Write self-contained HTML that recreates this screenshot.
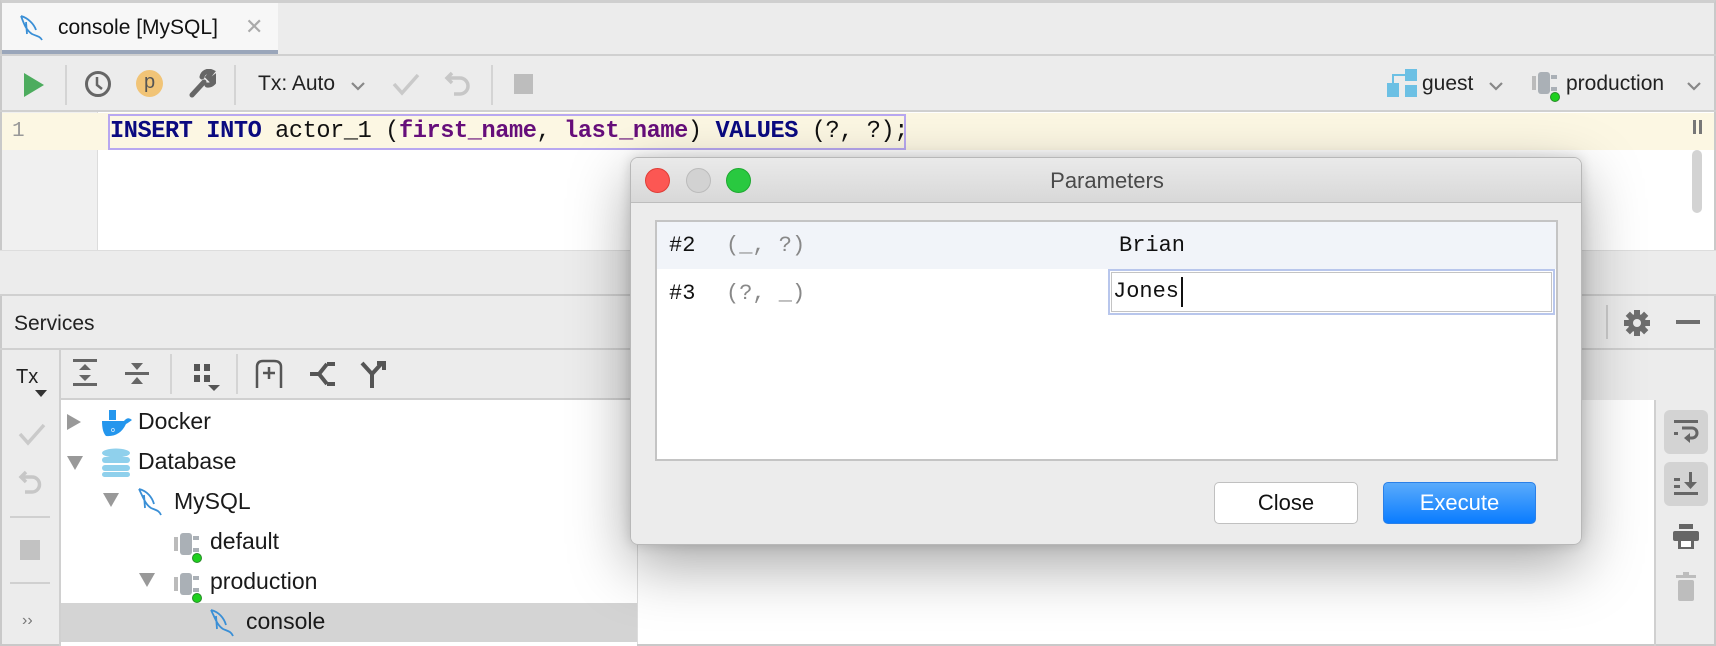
<!DOCTYPE html>
<html><head><meta charset="utf-8">
<style>
*{margin:0;padding:0;box-sizing:border-box}
body{width:1716px;height:646px;overflow:hidden;background:#ececec;font-family:"Liberation Sans",sans-serif;position:relative;color:#222}
.a{position:absolute}
.mono{font-family:"Liberation Mono",monospace}
.t{font-size:23px;color:#1a1a1a}
</style></head><body>
<div class="a" style="left:0;top:0;width:1716px;height:646px;border:2px solid #c9c9c9;border-top:3px solid #cfcfcf"></div>
<div class="a" style="left:2px;top:3px;width:276px;height:48px;background:#f7f7f7"></div>
<div class="a" style="left:2px;top:50px;width:276px;height:5px;background:#9aa6ba"></div>
<div class="a" style="left:0;top:54px;width:1716px;height:2px;background:#d0d0d0"></div>
<svg class="a" style="left:18px;top:14px" width="32" height="28" viewBox="0 0 32 28"><path d="M3 2 C6 10 8 16 14 20 C18 22 22 22 24 26 M3 2 C10 4 16 10 18 16 M8 8 L9 20" stroke="#3a8fd6" stroke-width="1.8" fill="none"/></svg>
<div class="a" style="left:58px;top:16px;font-size:21px;color:#111">console [MySQL]</div>
<div class="a" style="left:245px;top:14px;font-size:22px;color:#aaa">✕</div>
<svg class="a" style="left:22px;top:72px" width="24" height="26"><path d="M2 1 L22 13 L2 25Z" fill="#4dac5e"/></svg>
<div class="a" style="left:65px;top:65px;width:2px;height:40px;background:#d4d4d4"></div>
<svg class="a" style="left:84px;top:70px" width="28" height="28"><circle cx="14" cy="14" r="11.5" stroke="#666" stroke-width="3" fill="none"/><path d="M13 7 V15 L18 19" stroke="#666" stroke-width="2.5" fill="none"/></svg>
<div class="a" style="left:136px;top:70px;width:27px;height:27px;border-radius:50%;background:#f1c477;font-size:20px;text-align:center;line-height:25px;color:#555">p</div>
<svg class="a" style="left:188px;top:69px" width="28" height="30"><path d="M4 26 L16 13 M14 8 A7 7 0 0 1 24 3 L20 8 L23 11 L27 8 A7 7 0 0 1 19 16" stroke="#666" stroke-width="5" fill="none" stroke-linecap="round"/></svg>
<div class="a" style="left:234px;top:65px;width:2px;height:40px;background:#d4d4d4"></div>
<div class="a" style="left:258px;top:72px;font-size:21px;color:#222">Tx: Auto</div>
<svg class="a" style="left:350px;top:80px" width="16" height="12"><path d="M2 3 L8 9 L14 3" stroke="#888" stroke-width="2.2" fill="none"/></svg>
<svg class="a" style="left:392px;top:72px" width="28" height="24"><path d="M2 12 L10 21 L26 3" stroke="#c9c9c9" stroke-width="3.5" fill="none"/></svg>
<svg class="a" style="left:444px;top:69px" width="28" height="30"><path d="M8 4 L3 9 L8 14 M3 9 H16 A8 8 0 0 1 16 25 H10" stroke="#c7c7c7" stroke-width="3.5" fill="none"/></svg>
<div class="a" style="left:491px;top:65px;width:2px;height:40px;background:#d4d4d4"></div>
<div class="a" style="left:514px;top:74px;width:19px;height:20px;background:#bdbdbd"></div>
<svg class="a" style="left:1387px;top:69px" width="34" height="30"><rect x="0" y="14" width="12" height="14" fill="#6cc0e4"/><rect x="18" y="0" width="12" height="12" fill="#6cc0e4"/><rect x="18" y="16" width="12" height="12" fill="#6cc0e4"/><path d="M6 14 V6 H18" stroke="#6cc0e4" stroke-width="2" fill="none"/></svg>
<div class="a" style="left:1422px;top:72px;font-size:21px;color:#222">guest</div>
<svg class="a" style="left:1488px;top:80px" width="16" height="12"><path d="M2 3 L8 9 L14 3" stroke="#888" stroke-width="2.2" fill="none"/></svg>
<svg class="a" style="left:1531px;top:70px" width="32" height="34"><rect x="1" y="6" width="4" height="14" fill="#bbb"/><rect x="7" y="2" width="12" height="22" rx="3" fill="#aab0b6"/><rect x="20" y="5" width="6" height="4" fill="#aab0b6"/><rect x="20" y="17" width="6" height="4" fill="#aab0b6"/><circle cx="24" cy="27" r="4.5" fill="#1ed01e" stroke="#2a8a2a" stroke-width="1"/></svg>
<div class="a" style="left:1566px;top:72px;font-size:21px;color:#222">production</div>
<svg class="a" style="left:1686px;top:80px" width="16" height="12"><path d="M2 3 L8 9 L14 3" stroke="#888" stroke-width="2.2" fill="none"/></svg>
<div class="a" style="left:0;top:110px;width:1716px;height:2px;background:#d0d0d0"></div>
<div class="a" style="left:2px;top:112px;width:96px;height:138px;background:#f0f0f0;border-right:1px solid #dcdcdc"></div>
<div class="a" style="left:2px;top:113px;width:1712px;height:37px;background:#fcf7e3"></div>
<div class="a" style="left:98px;top:112px;width:1616px;height:138px;background:#fff"></div>
<div class="a" style="left:98px;top:113px;width:1616px;height:37px;background:#fcf7e3"></div>
<div class="a mono" style="left:12px;top:120px;font-size:21px;color:#999">1</div>
<div class="a" style="left:108px;top:114px;width:798px;height:36px;border:2px solid #b8a8f0"></div>
<div class="a mono" style="left:110px;top:118px;font-size:23.6px;white-space:pre;color:#111;letter-spacing:-0.4px"><b style="color:#0a0a80">INSERT INTO</b> actor_1 (<b style="color:#660e7a">first_name</b>, <b style="color:#660e7a">last_name</b>) <b style="color:#0a0a80">VALUES</b> (?, ?);</div>
<div class="a" style="left:1693px;top:120px;width:3px;height:14px;background:#777"></div><div class="a" style="left:1699px;top:120px;width:3px;height:14px;background:#777"></div>
<div class="a" style="left:1692px;top:150px;width:10px;height:63px;border-radius:5px;background:#d3d3d3"></div>
<div class="a" style="left:0;top:250px;width:1716px;height:45px;background:#ececec;border-top:1px solid #ddd"></div>
<div class="a" style="left:0;top:294px;width:1716px;height:2px;background:#d0d0d0"></div>
<div class="a" style="left:14px;top:312px;font-size:21px;color:#222">Services</div>
<div class="a" style="left:1606px;top:305px;width:2px;height:34px;background:#ccc"></div>
<svg class="a" style="left:1623px;top:309px" width="28" height="28"><g fill="#6e6e6e"><circle cx="14" cy="14" r="9"/><rect x="11" y="1" width="6" height="26"/><rect x="1" y="11" width="26" height="6"/><rect x="11" y="1" width="6" height="26" transform="rotate(45 14 14)"/><rect x="11" y="1" width="6" height="26" transform="rotate(-45 14 14)"/></g><circle cx="14" cy="14" r="4" fill="#ececec"/></svg>
<div class="a" style="left:1676px;top:320px;width:24px;height:4px;background:#6e6e6e"></div>
<div class="a" style="left:0;top:348px;width:1716px;height:2px;background:#d0d0d0"></div>
<div class="a" style="left:59px;top:350px;width:2px;height:296px;background:#d0d0d0"></div>
<div class="a" style="left:16px;top:366px;font-size:20px;color:#222">Tx</div>
<svg class="a" style="left:35px;top:390px" width="12" height="8"><path d="M0 0 H12 L6 7Z" fill="#333"/></svg>
<svg class="a" style="left:18px;top:422px" width="28" height="24"><path d="M2 12 L10 21 L26 3" stroke="#cacaca" stroke-width="3.5" fill="none"/></svg>
<svg class="a" style="left:18px;top:468px" width="26" height="30"><path d="M8 4 L3 9 L8 14 M3 9 H14 A7 7 0 0 1 14 24 H7" stroke="#c7c7c7" stroke-width="3.5" fill="none"/></svg>
<div class="a" style="left:10px;top:516px;width:40px;height:2px;background:#d0d0d0"></div>
<div class="a" style="left:20px;top:540px;width:20px;height:20px;background:#c2c2c2"></div>
<div class="a" style="left:10px;top:582px;width:40px;height:2px;background:#d0d0d0"></div>
<div class="a" style="left:22px;top:612px;font-size:16px;color:#777">››</div>
<svg class="a" style="left:72px;top:358px" width="26" height="30"><g fill="#666"><rect x="1" y="1" width="24" height="3"/><rect x="1" y="25" width="24" height="3"/><path d="M13 6 L19 12 H7Z M13 23 L19 17 H7Z"/></g></svg>
<svg class="a" style="left:124px;top:361px" width="26" height="26"><g fill="#666"><rect x="1" y="11" width="24" height="3"/><path d="M13 9 L19 2 H7Z M13 16 L19 23 H7Z"/></g></svg>
<div class="a" style="left:170px;top:354px;width:2px;height:40px;background:#d4d4d4"></div>
<svg class="a" style="left:192px;top:362px" width="32" height="32"><g fill="#555"><rect x="2" y="2" width="6" height="7"/><rect x="12" y="2" width="6" height="7"/><rect x="2" y="13" width="6" height="7"/><rect x="12" y="13" width="6" height="7"/><path d="M16 23 H28 L22 29Z"/></g></svg>
<div class="a" style="left:236px;top:354px;width:2px;height:40px;background:#d4d4d4"></div>
<svg class="a" style="left:254px;top:359px" width="32" height="30"><path d="M3 29 V8 Q3 2 9 2 H20 Q27 2 27 8 V29 M15 8 V20 M9 14 H21" stroke="#555" stroke-width="2.5" fill="none"/></svg>
<svg class="a" style="left:307px;top:360px" width="30" height="30"><path d="M20 4 L12 14 L3 14 M12 14 L20 24 M20 4 H28 M20 24 H28" stroke="#555" stroke-width="4" fill="none"/></svg>
<svg class="a" style="left:358px;top:360px" width="30" height="30"><path d="M14 28 V14 L4 3 M14 14 L24 3 M19 3 H26 V10" stroke="#555" stroke-width="4" fill="none"/></svg>
<div class="a" style="left:61px;top:398px;width:576px;height:248px;background:#fff;border-top:2px solid #d0d0d0"></div>
<div class="a" style="left:61px;top:603px;width:576px;height:39px;background:#d4d4d4"></div>
<svg class="a" style="left:66px;top:413px" width="16" height="18"><path d="M1 1 L15 9 L1 17Z" fill="#999"/></svg>
<svg class="a" style="left:102px;top:410px" width="30" height="28"><rect x="7" y="0" width="7" height="10" fill="#2496ed"/><path d="M0 11 H22 Q26 6 30 10 Q26 13 24 14 Q18 27 4 26 Q0 22 0 11Z" fill="#2496ed"/><text x="9" y="22" font-size="7" fill="#fff" font-family="Liberation Sans">o</text></svg>
<div class="a t" style="left:138px;top:408px">Docker</div>
<svg class="a" style="left:66px;top:455px" width="18" height="16"><path d="M1 1 H17 L9 15Z" fill="#999"/></svg>
<svg class="a" style="left:101px;top:448px" width="30" height="30"><g fill="#8fd0ec"><ellipse cx="15" cy="5" rx="14" ry="4.5"/><rect x="1" y="9" width="28" height="6" rx="3"/><rect x="1" y="17" width="28" height="6" rx="3"/><rect x="1" y="24" width="28" height="5" rx="2.5"/></g></svg>
<div class="a t" style="left:138px;top:448px">Database</div>
<svg class="a" style="left:102px;top:492px" width="18" height="16"><path d="M1 1 H17 L9 15Z" fill="#999"/></svg>
<svg class="a" style="left:137px;top:487px" width="30" height="30"><path d="M2 2 C6 10 8 17 14 21 C18 23 22 23 24 28 M2 2 C10 4 15 10 17 17 M7 8 L8 21" stroke="#3a8fd6" stroke-width="1.8" fill="none"/></svg>
<div class="a t" style="left:174px;top:488px">MySQL</div>
<svg class="a" style="left:173px;top:531px" width="32" height="34"><rect x="1" y="6" width="4" height="14" fill="#bbb"/><rect x="7" y="2" width="12" height="22" rx="3" fill="#aab0b6"/><rect x="20" y="5" width="6" height="4" fill="#aab0b6"/><rect x="20" y="17" width="6" height="4" fill="#aab0b6"/><circle cx="24" cy="27" r="4.5" fill="#1ed01e" stroke="#2a8a2a" stroke-width="1"/></svg>
<div class="a t" style="left:210px;top:528px">default</div>
<svg class="a" style="left:138px;top:572px" width="18" height="16"><path d="M1 1 H17 L9 15Z" fill="#999"/></svg>
<svg class="a" style="left:173px;top:571px" width="32" height="34"><rect x="1" y="6" width="4" height="14" fill="#bbb"/><rect x="7" y="2" width="12" height="22" rx="3" fill="#aab0b6"/><rect x="20" y="5" width="6" height="4" fill="#aab0b6"/><rect x="20" y="17" width="6" height="4" fill="#aab0b6"/><circle cx="24" cy="27" r="4.5" fill="#1ed01e" stroke="#2a8a2a" stroke-width="1"/></svg>
<div class="a t" style="left:210px;top:568px">production</div>
<svg class="a" style="left:209px;top:608px" width="30" height="30"><path d="M2 2 C6 10 8 17 14 21 C18 23 22 23 24 28 M2 2 C10 4 15 10 17 17 M7 8 L8 21" stroke="#3a8fd6" stroke-width="1.8" fill="none"/></svg>
<div class="a t" style="left:246px;top:608px">console</div>
<div class="a" style="left:637px;top:400px;width:1018px;height:244px;background:#fff;border-left:1px solid #ddd"></div>
<div class="a" style="left:1654px;top:400px;width:2px;height:246px;background:#d0d0d0"></div>
<div class="a" style="left:1664px;top:410px;width:44px;height:44px;border-radius:6px;background:#d3d3d3"></div>
<svg class="a" style="left:1672px;top:418px" width="28" height="28"><g fill="#666"><rect x="2" y="2" width="24" height="3"/><rect x="2" y="14" width="4" height="3"/><path d="M10 10 H20 A5 5 0 0 1 20 20 H16" stroke="#666" stroke-width="3" fill="none"/><path d="M18 15 L12 20 L18 25Z"/></g></svg>
<div class="a" style="left:1664px;top:462px;width:44px;height:44px;border-radius:6px;background:#d3d3d3"></div>
<svg class="a" style="left:1672px;top:470px" width="28" height="28"><g fill="#666"><rect x="2" y="22" width="24" height="3"/><rect x="2" y="8" width="6" height="3"/><rect x="2" y="15" width="6" height="3"/><rect x="17" y="2" width="3" height="12"/><path d="M12 12 H25 L18.5 19Z"/></g></svg>
<svg class="a" style="left:1672px;top:522px" width="28" height="30"><g fill="#666"><rect x="7" y="2" width="14" height="5"/><rect x="1" y="9" width="26" height="10" rx="2"/><rect x="6" y="17" width="16" height="10" fill="#666"/><rect x="9" y="19" width="10" height="6" fill="#fff"/></g></svg>
<svg class="a" style="left:1674px;top:572px" width="24" height="30"><g fill="#bdbdbd"><rect x="2" y="3" width="20" height="3"/><rect x="9" y="0" width="6" height="3"/><rect x="4" y="8" width="16" height="21" rx="2"/></g></svg>
<div class="a" style="left:630px;top:157px;width:952px;height:388px;border-radius:8px;box-shadow:0 20px 60px rgba(0,0,0,0.35),0 0 12px rgba(0,0,0,0.15)"></div>
<div class="a" style="left:630px;top:157px;width:952px;height:388px;border-radius:8px;background:#ececec;border:1px solid #b8b8b8;overflow:hidden">
 <div class="a" style="left:0;top:0;width:952px;height:45px;background:linear-gradient(#eaeaea,#d8d8d8);border-bottom:1px solid #bdbdbd"></div>
 <div class="a" style="left:14px;top:10px;width:25px;height:25px;border-radius:50%;background:#fc5753;border:1px solid #df3d36"></div>
 <div class="a" style="left:55px;top:10px;width:25px;height:25px;border-radius:50%;background:#d2d2d2;border:1px solid #bbb"></div>
 <div class="a" style="left:95px;top:10px;width:25px;height:25px;border-radius:50%;background:#29c940;border:1px solid #1ea930"></div>
 <div class="a" style="left:0;top:10px;width:952px;text-align:center;font-size:22px;color:#4a4a4a">Parameters</div>
 <div class="a" style="left:24px;top:62px;width:903px;height:241px;background:#fff;border:2px solid #c4c4c4"></div>
 <div class="a" style="left:26px;top:64px;width:899px;height:47px;background:#f1f4f9"></div>
 <div class="a mono" style="left:38px;top:75px;font-size:22px;color:#111">#2</div>
 <div class="a mono" style="left:95px;top:75px;font-size:22px;color:#888;white-space:pre">(_, ?)</div>
 <div class="a mono" style="left:488px;top:75px;font-size:22px;color:#111">Brian</div>
 <div class="a mono" style="left:38px;top:123px;font-size:22px;color:#111">#3</div>
 <div class="a mono" style="left:95px;top:123px;font-size:22px;color:#888;white-space:pre">(?, _)</div>
 <div class="a" style="left:477px;top:111px;width:447px;height:46px;border:2px solid #b8c6ec;background:#fff"><div style="position:absolute;left:1px;top:1px;right:1px;bottom:1px;border:1px solid #c4c4c4"></div></div>
 <div class="a mono" style="left:482px;top:121px;font-size:22px;color:#111">Jones</div>
 <div class="a" style="left:550px;top:119px;width:2px;height:30px;background:#111"></div>
 <div class="a" style="left:583px;top:324px;width:144px;height:42px;border-radius:5px;background:#fff;border:1px solid #c0c0c0;text-align:center;line-height:40px;font-size:22px;color:#111">Close</div>
 <div class="a" style="left:752px;top:324px;width:153px;height:42px;border-radius:5px;background:linear-gradient(#5aabfb,#0a7cff);border:1px solid #2a80e8;text-align:center;line-height:40px;font-size:22px;color:#fff">Execute</div>
</div>
</body></html>
